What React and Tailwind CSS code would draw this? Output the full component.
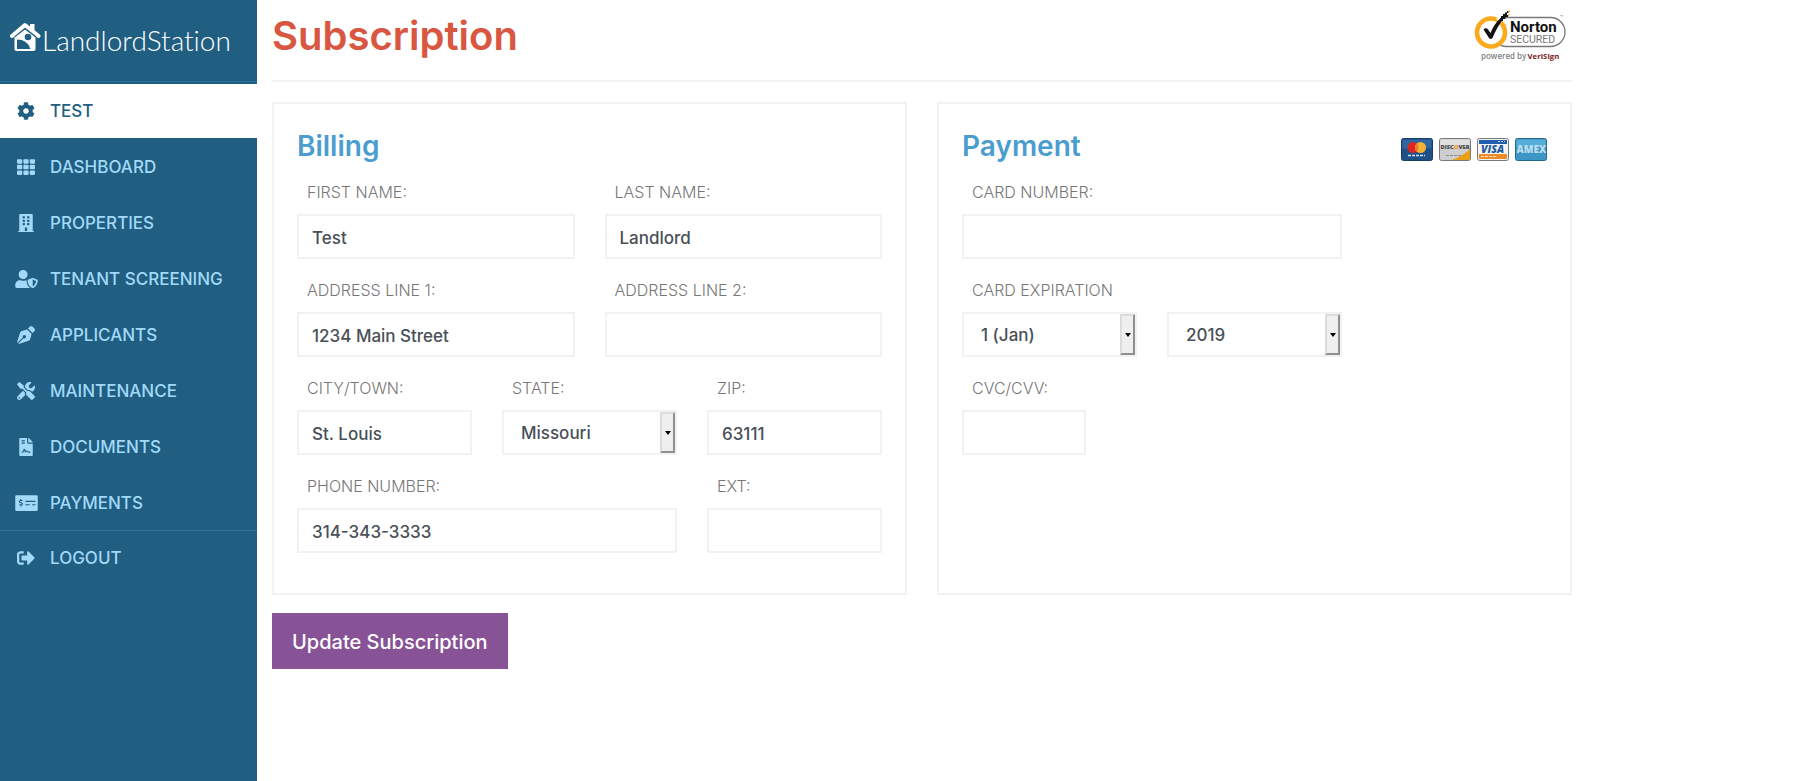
import React, { useState } from 'react';
import {
    FaCog,
    FaTh,
    FaBuilding,
    FaUserShield,
    FaPenNib,
    FaTools,
    FaFileContract,
    FaMoneyCheckAlt,
    FaSignOutAlt,
} from 'react-icons/fa';

const navItems = [
    { label: 'TEST', icon: FaCog, active: true },
    { label: 'DASHBOARD', icon: FaTh },
    { label: 'PROPERTIES', icon: FaBuilding },
    { label: 'TENANT SCREENING', icon: FaUserShield, wide: true },
    { label: 'APPLICANTS', icon: FaPenNib },
    { label: 'MAINTENANCE', icon: FaTools },
    { label: 'DOCUMENTS', icon: FaFileContract },
    { label: 'PAYMENTS', icon: FaMoneyCheckAlt, wide: true },
];

const controlStyle =
    'block h-[45px] w-full appearance-none rounded-none border-2 border-[#f1f2f3] bg-white pt-0.5 text-[17px] font-medium text-[#495057] outline-none focus:border-[#4b9dd0]';

const NavLink = ({ label, icon: Icon, active, wide }) => (
    <a
        href="#"
        className={`flex h-[54px] items-center gap-3 pt-0.5 pl-3.5 text-[17px] font-medium ${
            active ? 'bg-white text-[#205e82]' : 'text-[#a2d9f9] hover:bg-[#1b5273]'
        }`}
    >
        <span className="flex w-6 justify-center pb-0.5">
            <Icon className={wide ? 'h-[18px] w-[23px]' : 'h-[18px] w-[18px]'} />
        </span>
        {label}
    </a>
);

const Logo = () => (
    <a href="#" className="flex items-end gap-px text-white">
        <svg viewBox="0 0 31 30" className="h-[30px] w-[31px]" aria-hidden="true">
            <path d="M2 14 L15 3 L28.500 14" fill="none" stroke="#fff" strokeWidth="4" strokeLinecap="round" strokeLinejoin="round" />
            <path d="M20 2 H24.500 V9 H20 Z" fill="#fff" />
            <path d="M4.500 15.500 L15 7.500 L25.500 15.500 V27 Q25.500 29 23.500 29 H6.500 Q4.500 29 4.500 27 Z" fill="#fff" />
            <path d="M5 14.500 L15 6.500 L26 14.500" fill="none" stroke="#205e82" strokeWidth="0.800" />
            <path d="M7 17.500 Q17.500 17.500 20.500 27 H7 Z" fill="#205e82" />
            <circle cx="18" cy="15" r="3.300" fill="#205e82" />
        </svg>
        <span className="font-['Lato',sans-serif] text-[28px] leading-6 font-light [font-variant-ligatures:none]">
            LandlordStation
        </span>
    </a>
);

const NortonSeal = () => (
    <svg viewBox="0 0 92 52" className="h-[52px] w-[92px]" role="img" aria-label="Norton Secured">
        <rect x="18" y="7.500" width="73" height="29" rx="14.500" fill="#fff" stroke="#77787b" strokeWidth="1.300" />
        <circle cx="17" cy="22.500" r="14" fill="#fff" stroke="#fbaa1d" strokeWidth="4.600" />
        <path d="M24 11 L30 6" fill="none" stroke="#fff" strokeWidth="6" />
        <path d="M9.500 19.500 Q12 17 14 19.500 L16.500 23 Q20 14 27.500 7 L29 9.500 Q23 17 18.500 28 Q16.500 30 15 28 Z" fill="#111" />
        <path d="M27 6 H29 V4 H31 V2.500 H33 V1 H34.500 V3 H33 V5 H34 V7 H31.500 V9 H29 V11 H27 Z" fill="#111" />
        <path d="M34 0.500 H36 V2 H34 Z M34 4 H35.500 V5.500 H34 Z" fill="#fbaa1d" />
        <text fontFamily="Roboto">
            <tspan x="36" y="21.500" fontWeight="700" fontSize="15" fill="#111">Norton</tspan>
            <tspan x="36" y="32.500" fontWeight="400" fontSize="10.500" fill="#77787b">SECURED</tspan>
        </text>
        <text x="86" y="8" fontFamily="Open Sans" fontSize="4" fill="#77787b">™</text>
        <text x="7" y="48.500" fontFamily="Open Sans" fontWeight="600" fontSize="8" fill="#808184">powered by</text>
        <text x="53.500" y="48.500" fontFamily="Open Sans" fontWeight="700" fontSize="7.800" fill="#7b1a21">VeriSign</text>
    </svg>
);

const MasterCard = () => (
    <svg viewBox="0 0 32 23" className="h-[23px] w-8" role="img" aria-label="Mastercard">
        <rect x="0.500" y="0.500" width="31" height="22" rx="2" fill="#1f4f87" stroke="#173c69" />
        <rect x="1.500" y="1.500" width="29" height="9" rx="1" fill="#2f66a1" />
        <circle cx="12" cy="9.500" r="5.500" fill="#dc2626" />
        <circle cx="19.500" cy="9.500" r="5.500" fill="#f5b335" />
        <path d="M15.750 5.500 A5.500 5.500 0 0 1 15.750 13.500 A5.500 5.500 0 0 1 15.750 5.500" fill="#ee7a2b" />
        <path d="M7 17.500 H24" stroke="#d6e2ef" strokeWidth="1.500" strokeDasharray="3 1" />
    </svg>
);

const Discover = () => (
    <svg viewBox="0 0 32 23" className="h-[23px] w-8" role="img" aria-label="Discover">
        <rect x="0.500" y="0.500" width="31" height="22" rx="2" fill="#cfcfcf" stroke="#77787a" />
        <rect x="1.500" y="1.500" width="29" height="7" rx="1" fill="#dfdfdf" />
        <path d="M31 11 V21 Q31 22 30 22 H13 Q24 18 31 11 Z" fill="#e9a013" />
        <text x="1.500" y="10.500" fontFamily="Open Sans" fontWeight="800" fontSize="5.800" fill="#4a4a4a">DISC<tspan fill="#f0971e">O</tspan>VER</text>
        <path d="M7 17.500 H22" stroke="#8a8a8a" strokeWidth="1.200" strokeDasharray="3 1" />
    </svg>
);

const Visa = () => (
    <svg viewBox="0 0 32 23" className="h-[23px] w-8" role="img" aria-label="Visa">
        <rect x="0.500" y="0.500" width="31" height="22" rx="2" fill="#f4f4f4" stroke="#77787a" />
        <rect x="2" y="2" width="28" height="4" fill="#1d5fae" />
        <rect x="2" y="16" width="28" height="5" fill="#f08a24" />
        <path d="M21 3.500 H28" stroke="#c9dcf0" strokeDasharray="2 1" />
        <path d="M4 18.500 H20" stroke="#fce3c8" strokeWidth="1.200" strokeDasharray="3 1" />
        <text x="4" y="15" fontFamily="Open Sans" fontWeight="800" fontStyle="italic" fontSize="10.500" fill="#1f5aa3">VISA</text>
    </svg>
);

const Amex = () => (
    <svg viewBox="0 0 32 23" className="h-[23px] w-8" role="img" aria-label="American Express">
        <rect x="0.500" y="0.500" width="31" height="22" rx="2" fill="#3d97c6" stroke="#24698f" />
        <rect x="1.500" y="1.500" width="29" height="8" rx="1" fill="#55aed8" />
        <text x="1.500" y="15" fontFamily="Open Sans" fontWeight="800" fontSize="10" fill="#b9dcee">AMEX</text>
    </svg>
);

const Label = ({ htmlFor, children }) => (
    <label htmlFor={htmlFor} className="mb-2 block pl-2.5 text-base leading-[27px] font-light text-[#777777]">
        {children}
    </label>
);

const TextInput = ({ id, ...props }) => (
    <input id={id} type="text" className={`${controlStyle} px-[13px]`} {...props} />
);

const Select = ({ id, options, ...props }) => (
    <div className="relative">
        <select id={id} className={`${controlStyle} pr-5 pl-[17px]`} {...props}>
            {options.map((option) => (
                <option key={option}>{option}</option>
            ))}
        </select>
        <span className="pointer-events-none absolute inset-y-0.5 right-0.5 flex w-[15px] items-center justify-center border-2 border-t-[#dcdcdc] border-r-[#8f8f8f] border-b-[#8f8f8f] border-l-[#dcdcdc] bg-[#efefef]">
            <svg viewBox="0 0 6 4" className="h-1 w-1.5" aria-hidden="true">
                <path d="M0 0 H6 L3 4 Z" fill="#000" />
            </svg>
        </span>
    </div>
);

const Panel = ({ title, aside, children }) => (
    <section className="border-2 border-[#f1f2f3] p-[23px]">
        <div className="mb-3.5 flex items-end justify-between">
            <h2 className="text-[28px] leading-[38px] font-semibold text-[#4b9dd0]">{title}</h2>
            {aside}
        </div>
        <div className="grid grid-cols-12 gap-x-[30px] gap-y-[18px] pb-[17px]">{children}</div>
    </section>
);

const App = () => {
    const [form, setForm] = useState({
        firstName: 'Test',
        lastName: 'Landlord',
        address1: '1234 Main Street',
        address2: '',
        city: 'St. Louis',
        state: 'Missouri',
        zip: '63111',
        phone: '314-343-3333',
        ext: '',
        cardNumber: '',
        expMonth: '1 (Jan)',
        expYear: '2019',
        cvc: '',
    });

    const field = (name) => ({
        id: name,
        value: form[name],
        onChange: (e) => setForm({ ...form, [name]: e.target.value }),
    });

    return (
        <div className="flex min-h-screen bg-white font-['Inter',sans-serif]">
            <aside className="w-[257px] shrink-0 bg-[#205e82]">
                <div className="mb-0.5 flex h-[82px] items-start border-b border-[#2f7299] pt-[22px] pl-2.5">
                    <Logo />
                </div>
                <nav>
                    <div className="flex flex-col gap-0.5 border-b border-[#2f7299]">
                        {navItems.map((item) => (
                            <NavLink key={item.label} {...item} />
                        ))}
                    </div>
                    <NavLink label="LOGOUT" icon={FaSignOutAlt} />
                </nav>
            </aside>

            <main className="min-w-0 flex-1 px-[15px]">
                <div className="max-w-[1300px]">
                    <header className="mb-5 flex h-[82px] items-start justify-between border-b-2 border-[#f1f2f3] pt-2.5 pr-1.5">
                        <h1 className="text-[40px] leading-[52px] font-semibold text-[#d95640]">Subscription</h1>
                        <NortonSeal />
                    </header>

                    <form onSubmit={(e) => e.preventDefault()}>
                        <div className="mb-[18px] grid grid-cols-1 gap-[30px] lg:grid-cols-2">
                            <Panel title="Billing">
                                <div className="col-span-6">
                                    <Label htmlFor="firstName">FIRST NAME:</Label>
                                    <TextInput {...field('firstName')} />
                                </div>
                                <div className="col-span-6">
                                    <Label htmlFor="lastName">LAST NAME:</Label>
                                    <TextInput {...field('lastName')} />
                                </div>
                                <div className="col-span-6">
                                    <Label htmlFor="address1">ADDRESS LINE 1:</Label>
                                    <TextInput {...field('address1')} />
                                </div>
                                <div className="col-span-6">
                                    <Label htmlFor="address2">ADDRESS LINE 2:</Label>
                                    <TextInput {...field('address2')} />
                                </div>
                                <div className="col-span-4">
                                    <Label htmlFor="city">CITY/TOWN:</Label>
                                    <TextInput {...field('city')} />
                                </div>
                                <div className="col-span-4">
                                    <Label htmlFor="state">STATE:</Label>
                                    <Select {...field('state')} options={['Illinois', 'Kansas', 'Missouri']} />
                                </div>
                                <div className="col-span-4">
                                    <Label htmlFor="zip">ZIP:</Label>
                                    <TextInput {...field('zip')} />
                                </div>
                                <div className="col-span-8">
                                    <Label htmlFor="phone">PHONE NUMBER:</Label>
                                    <TextInput {...field('phone')} />
                                </div>
                                <div className="col-span-4">
                                    <Label htmlFor="ext">EXT:</Label>
                                    <TextInput {...field('ext')} />
                                </div>
                            </Panel>

                            <Panel
                                title="Payment"
                                aside={
                                    <div className="mb-1 flex gap-1.5">
                                        <MasterCard />
                                        <Discover />
                                        <Visa />
                                        <Amex />
                                    </div>
                                }
                            >
                                <div className="col-span-8">
                                    <Label htmlFor="cardNumber">CARD NUMBER:</Label>
                                    <TextInput {...field('cardNumber')} />
                                </div>
                                <div className="col-span-4 col-start-1">
                                    <Label htmlFor="expMonth">CARD EXPIRATION</Label>
                                    <Select {...field('expMonth')} options={['1 (Jan)', '2 (Feb)', '3 (Mar)']} />
                                </div>
                                <div className="col-span-4 self-end">
                                    <Select {...field('expYear')} aria-label="Expiration year" options={['2019', '2020', '2021']} />
                                </div>
                                <div className="col-span-3 col-start-1">
                                    <Label htmlFor="cvc">CVC/CVV:</Label>
                                    <TextInput {...field('cvc')} />
                                </div>
                            </Panel>
                        </div>

                        <button
                            type="submit"
                            className="h-14 bg-[#885296] px-5 pt-0.5 text-[20px] font-medium text-white hover:bg-[#764583]"
                        >
                            Update Subscription
                        </button>
                    </form>
                </div>
            </main>
        </div>
    );
};

export default App;
